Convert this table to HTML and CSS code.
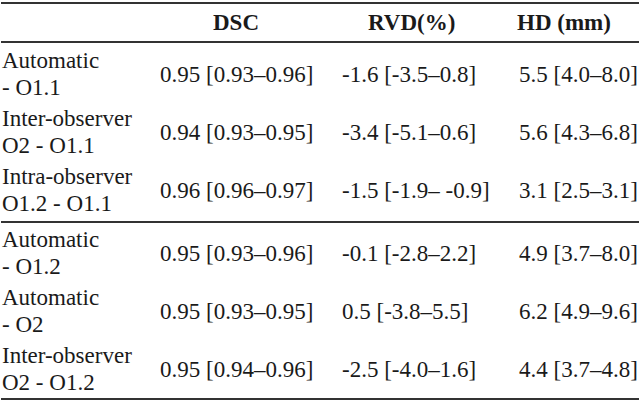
FILE: index.html
```html
<!DOCTYPE html>
<html>
<head>
<meta charset="utf-8">
<link rel="stylesheet" href="styles.css">
</head>
<body>
<div class="table">
  <div class="row head">
    <div class="cell"></div>
    <div class="cell h-dsc">DSC</div>
    <div class="cell h-rvd">RVD(%)</div>
    <div class="cell h-hd">HD (mm)</div>
  </div>
  <div class="group first">
    <div class="row">
      <div class="cell name">Automatic<br>- O1.1</div>
      <div class="cell">0.95 [0.93–0.96]</div>
      <div class="cell">-1.6 [-3.5–0.8]</div>
      <div class="cell">5.5 [4.0–8.0]</div>
    </div>
    <div class="row">
      <div class="cell name">Inter-observer<br>O2 - O1.1</div>
      <div class="cell">0.94 [0.93–0.95]</div>
      <div class="cell">-3.4 [-5.1–0.6]</div>
      <div class="cell">5.6 [4.3–6.8]</div>
    </div>
    <div class="row">
      <div class="cell name">Intra-observer<br>O1.2 - O1.1</div>
      <div class="cell">0.96 [0.96–0.97]</div>
      <div class="cell">-1.5 [-1.9– -0.9]</div>
      <div class="cell">3.1 [2.5–3.1]</div>
    </div>
  </div>
  <div class="group second">
    <div class="row">
      <div class="cell name">Automatic<br>- O1.2</div>
      <div class="cell">0.95 [0.93–0.96]</div>
      <div class="cell">-0.1 [-2.8–2.2]</div>
      <div class="cell">4.9 [3.7–8.0]</div>
    </div>
    <div class="row">
      <div class="cell name">Automatic<br>- O2</div>
      <div class="cell">0.95 [0.93–0.95]</div>
      <div class="cell">0.5 [-3.8–5.5]</div>
      <div class="cell">6.2 [4.9–9.6]</div>
    </div>
    <div class="row">
      <div class="cell name">Inter-observer<br>O2 - O1.2</div>
      <div class="cell">0.95 [0.94–0.96]</div>
      <div class="cell">-2.5 [-4.0–1.6]</div>
      <div class="cell">4.4 [3.7–4.8]</div>
    </div>
  </div>
</div>
</body>
</html>
```
FILE: styles.css
```css
html, body {
  margin: 0;
  padding: 0;
  background: #ffffff;
}
body {
  font-family: "Liberation Serif", "Times New Roman", serif;
  font-size: 23px;
  color: #1a1a1a;
}
.table {
  margin: 2px 1px 0 1px;
  border-top: 2px solid #333;
  border-bottom: 2px solid #333;
}
.row {
  display: grid;
  grid-template-columns: 159px 182px 177px 1fr;
  align-items: center;
}
.head {
  height: 37px;
  border-bottom: 2px solid #333;
  font-weight: bold;
}
.first {
  padding: 2px 0;
}
.second {
  border-top: 2px solid #333;
  padding: 1px 0 0 0;
}
.cell {
  white-space: nowrap;
  line-height: 27px;
}
.name {
  padding: 2px 0 2px 1px;
}
.h-dsc { padding-left: 53px; }
.h-rvd { padding-left: 26px; }
.h-hd { margin-left: -2px; }
```
